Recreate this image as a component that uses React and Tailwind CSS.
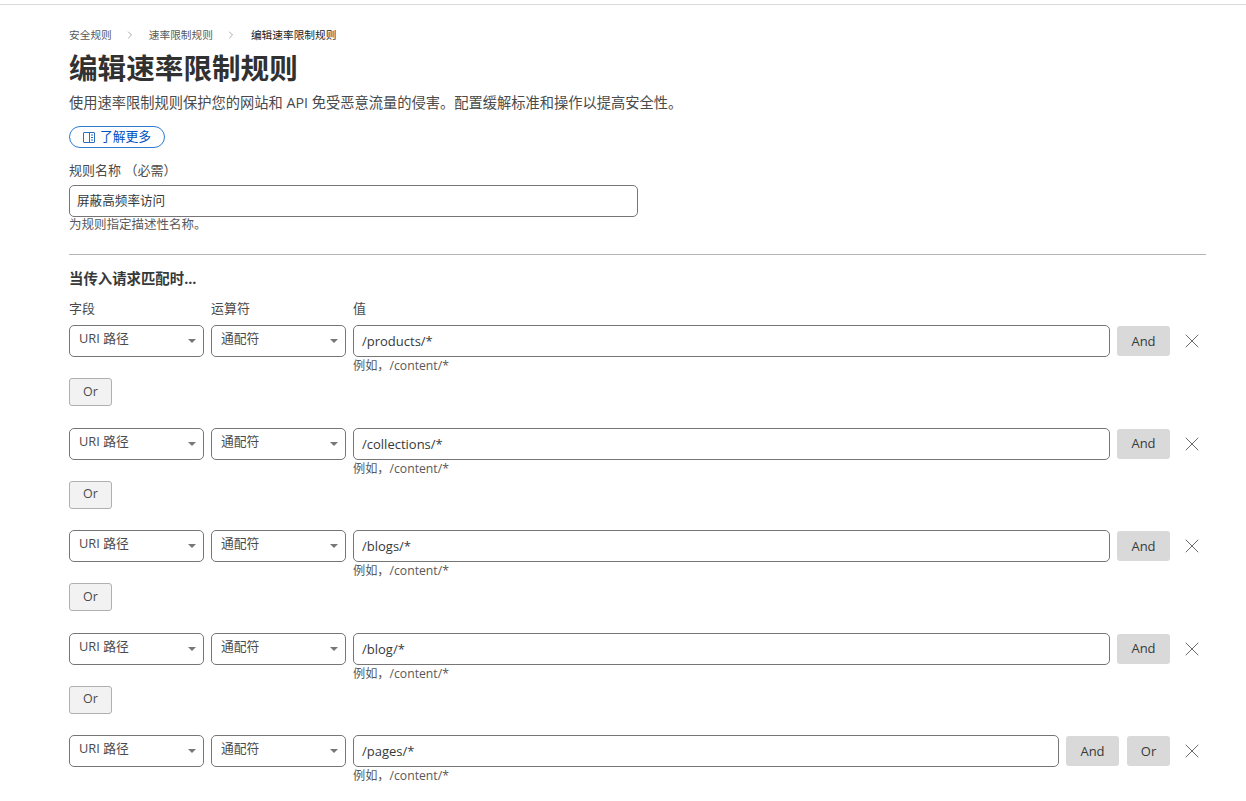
import React from 'react';
import { X, ChevronRight } from 'lucide-react';

const RULES = [
  { value: '/products/*', or: true },
  { value: '/collections/*', or: true },
  { value: '/blogs/*', or: true },
  { value: '/blog/*', or: true },
  { value: '/pages/*', or: false },
];

function Select({ label, width }) {
  return (
    <div className={`${width} h-8 shrink-0 rounded-[5px] border border-[#767676] bg-white flex items-center justify-between pl-[9px] pr-[7px] text-[12.8px] text-[#4a4a4a]`}>
      <span className="-mt-1">{label}</span>
      <span className="w-0 h-0 border-x-[4px] border-x-transparent border-t-[4px] border-t-[#777777]" />
    </div>
  );
}

function GrayButton({ children, width }) {
  return (
    <button className={`${width} h-[30px] shrink-0 rounded-[3px] bg-[#d9d9d9] pt-px text-[13px] text-[#36393a] flex items-center justify-center`}>
      {children}
    </button>
  );
}

function RuleRow({ value, or }) {
  return (
    <div className="mb-[21.5px]">
      <div className="flex items-start gap-[7px]">
        <Select label="URI 路径" width="w-[135px]" />
        <Select label="通配符" width="w-[135px]" />
        <div className="flex-1 min-w-0">
          <div className="h-8 rounded-[5px] border border-[#767676] bg-white flex items-center pl-2 pt-[2px] text-[13px] text-[#36393a]">
            {value}
          </div>
          <div className="mt-px text-[12.2px] leading-4 text-[#595959] h-4">例如，/content/*</div>
        </div>
        <div className="flex items-center gap-[7px] pt-[1px]">
          <GrayButton width="w-[53px]">And</GrayButton>
          {!or && <div className="pl-px"><GrayButton width="w-[43px]">Or</GrayButton></div>}
          <button className="w-[29px] h-[30px] pl-px flex items-center justify-center text-[#36393a]">
            <X size={24} strokeWidth={0.75} />
          </button>
        </div>
      </div>
      {or && (
        <button className="block mt-[4px] w-[43px] h-7 rounded-[3px] border border-[#b0b0b0] bg-[#f2f2f2] text-[12.5px] text-[#4a4a4a]">
          Or
        </button>
      )}
    </div>
  );
}

export default function App() {
  return (
    <div className="h-[801px] overflow-hidden bg-white font-['Open_Sans','Noto_Sans_CJK_SC',sans-serif]">
      <div className="h-[5px] border-b border-[#d9d9d9]" />
      <div className="pl-[69px] pr-[40px] pt-[22px]">
        {/* Breadcrumb */}
        <nav className="flex items-center h-4 text-[10.7px] text-[#595959]">
          <span>安全规则</span>
          <ChevronRight size={12} strokeWidth={1} className="ml-[12px] mr-[13px] text-[#555555]" />
          <span>速率限制规则</span>
          <ChevronRight size={12} strokeWidth={1} className="ml-[12px] mr-[14px] text-[#555555]" />
          <span className="text-[#222222]">编辑速率限制规则</span>
        </nav>

        <h1 className="mt-[5px] text-[28.6px] leading-[40px] font-bold text-[#313131]">编辑速率限制规则</h1>
        <p className="mt-[5px] text-[14.25px] leading-5 text-[#4a4a4a]">
          使用速率限制规则保护您的网站和 API 免受恶意流量的侵害。配置缓解标准和操作以提高安全性。
        </p>

        <a className="mt-[13px] w-24 h-[22px] rounded-full border border-[#2c7cd1] flex items-center justify-center gap-[5px] text-[12.8px] text-[#0051c3]">
          <svg width="12" height="11" viewBox="0 0 12 11" fill="none" stroke="#2c6fbf" strokeWidth="1">
            <rect x="0.5" y="0.5" width="11" height="10" rx="0.5" />
            <path d="M6.5 0.5V10.5M8 3H10M8 5.5H10M8 8H10" />
          </svg>
          <span>了解更多</span>
        </a>

        {/* Rule name */}
        <label className="block mt-[12px] text-[13px] leading-5 text-[#4a4a4a]">规则名称 （必需）</label>
        <div className="mt-[5px] w-[569px] h-8 rounded-[5px] border border-[#767676] flex items-center pl-[7px] text-[12.6px] text-[#36393a]">
          屏蔽高频率访问
        </div>
        <div className="text-[12.5px] leading-4 text-[#595959]">为规则指定描述性名称。</div>

        <hr className="mt-[21px] border-[#b5b5b5]" />

        <div className="mt-[14px] text-[14.4px] leading-5 font-bold text-[#36393a]">当传入请求匹配时...</div>

        {/* Column headers */}
        <div className="mt-[9px] h-5 flex gap-[7px] text-[13px] leading-5 text-[#4a4a4a]">
          <span className="w-[135px]">字段</span>
          <span className="w-[135px]">运算符</span>
          <span>值</span>
        </div>

        <div className="mt-[7px]">
          {RULES.map((r) => (
            <RuleRow key={r.value} value={r.value} or={r.or} />
          ))}
        </div>
      </div>
    </div>
  );
}
